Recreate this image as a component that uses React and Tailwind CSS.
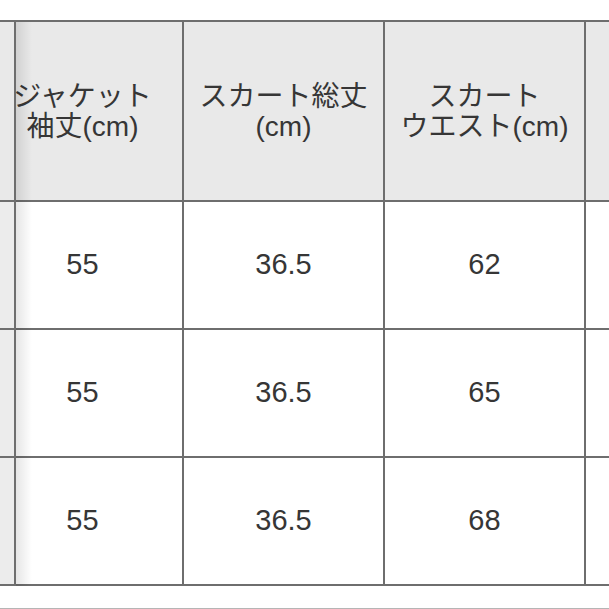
const columns = [
  { label: ["ジャケット", "袖丈(cm)"], values: ["55", "55", "55"] },
  { label: ["スカート総丈", "(cm)"], values: ["36.5", "36.5", "36.5"] },
  { label: ["スカート", "ウエスト(cm)"], values: ["62", "65", "68"] },
  { label: ["", ""], values: ["", "", ""] },
];

const font = { fontFamily: '"Liberation Sans", "Noto Sans CJK JP", sans-serif' };

const App = () => {
  return (
    <div
      className="relative w-[609px] h-[609px] overflow-hidden bg-white text-[#363636]"
      style={font}
    >
      <div className="pt-[20px]">
        <div className="ml-[-17px] flex w-max border-t-2 border-[#6e6e6e]">
          {columns.map((col, i) => (
            <div key={i} className="flex w-[201px] flex-col">
              <div className="flex h-[180px] flex-col items-center justify-center border-b-2 border-r-2 border-[#6e6e6e] bg-[#e9e9e9] pt-[2px] text-[28px] leading-[30px]">
                <span className="whitespace-nowrap">{col.label[0]}</span>
                <span className="whitespace-nowrap">{col.label[1]}</span>
              </div>
              {col.values.map((v, j) => (
                <div
                  key={j}
                  className="flex h-[128px] items-center justify-center border-b-2 border-r-2 border-[#6e6e6e] bg-white text-[29px]"
                >
                  {v}
                </div>
              ))}
            </div>
          ))}
        </div>
        <div className="mt-[22px] h-[2px] bg-[#b5b5b5]" />
      </div>

      {/* sticky first column */}
      <div className="absolute left-0 top-[20px] flex w-[16px] flex-col border-t-2 border-[#6e6e6e]">
        <div className="h-[180px] border-b-2 border-r-2 border-[#6e6e6e] bg-[#e9e9e9]" />
        {[0, 1, 2].map((k) => (
          <div key={k} className="h-[128px] border-b-2 border-r-2 border-[#6e6e6e] bg-[#ececec]" />
        ))}
        <div className="absolute left-[16px] top-0 h-full w-[16px] bg-gradient-to-r from-black/10 to-transparent" />
      </div>
    </div>
  );
};

export default App;
